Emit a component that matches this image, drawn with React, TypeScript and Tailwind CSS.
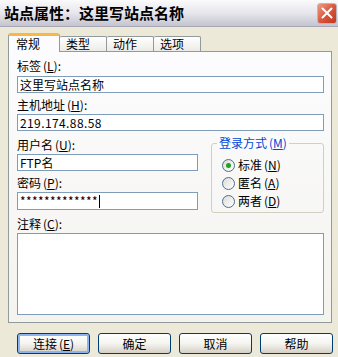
import React from "react";

const font = { fontFamily: '"Noto Sans CJK SC", "Liberation Sans", sans-serif' };

function U({ c }: { c: string }) {
  return <span className="underline underline-offset-[1px]">{c}</span>;
}

function Label({ text, k, mt }: { text: string; k: string; mt: string }) {
  return (
    <div className={`h-[14px] leading-[14px] text-[12px] text-black ${mt}`}>
      {text}
      <span className="ml-[2px]">(</span>
      <U c={k} />
      <span>):</span>
    </div>
  );
}

function Input({ value, mt, w, h, cursor, spaced }: { value: string; mt: string; w: string; h: string; cursor?: boolean; spaced?: boolean }) {
  return (
    <div className={`${mt} ${w} ${h} border border-[#7f9db9] bg-white flex items-center pl-[2px] text-[12px] leading-[14px] text-black`}>
      <span className={spaced ? "tracking-[0.4px]" : ""}>{value}</span>
      {cursor && <span className="inline-block w-px h-[13px] bg-black ml-[1px]" />}
    </div>
  );
}

function Radio({ checked, text, k }: { checked?: boolean; text: string; k: string }) {
  return (
    <div className="flex items-center h-[18px]">
      <div className="w-[13px] h-[13px] rounded-full border border-[#4a6f95] bg-gradient-to-br from-[#dcdcd6] to-white flex items-center justify-center">
        {checked && <div className="w-[5px] h-[5px] rounded-full bg-[#21a121]" />}
      </div>
      <span className="ml-[3px] text-[12px] leading-[14px] text-black">
        {text}
        <span className="ml-[2px]">(</span>
        <U c={k} />)
      </span>
    </div>
  );
}

function Btn({ children, def }: { children: React.ReactNode; def?: boolean }) {
  return (
    <div
      className={`w-[73px] h-[21px] rounded-[3px] border border-[#003c74] bg-gradient-to-b from-white via-[#f4f4f0] to-[#d6d0c5] flex items-center justify-center text-[12px] text-black ${
        def ? "shadow-[inset_0_0_0_2px_#8cb4f2]" : ""
      }`}
    >
      {children}
    </div>
  );
}

export default function App() {
  return (
    <div className="w-[338px] h-[357px] bg-[#ece9d8] flex flex-col overflow-hidden" style={font}>
      {/* title bar */}
      <div className="h-[27px] flex items-center justify-between pl-[4px] pr-[1px] bg-gradient-to-b from-[#fbfbfc] via-[#e6e6ec] to-[#c4c4d0] border-b border-[#a8a8b4]">
        <span className="text-[15px] font-bold text-black">站点属性：这里写站点名称</span>
        <div className="w-[20px] h-[21px] rounded-[3px] border border-[#b8b8c4] bg-gradient-to-br from-[#ee9a86] via-[#d9583d] to-[#c0381c] flex items-center justify-center">
          <svg width="12" height="12" viewBox="0 0 12 12">
            <path d="M1.5 1.5 L10.5 10.5 M10.5 1.5 L1.5 10.5" stroke="white" strokeWidth="2" strokeLinecap="round" />
          </svg>
        </div>
      </div>

      <div className="pl-[8px] pt-[5px] flex flex-col">
        {/* tabs */}
        <div className="flex items-end h-[19px]">
          <div className="relative z-10 -mb-px w-[52px] h-[19px] bg-[#fcfcfe] border-x border-[#919b9c] border-t-[3px] border-t-[#f7b847] rounded-t-[3px] flex items-center pl-[7px] text-[12px] text-black">
            常规
          </div>
          {["类型", "动作", "选项"].map((t) => (
            <div
              key={t}
              className="w-[47px] h-[15px] border-t border-r border-[#919b9c] rounded-t-[2px] bg-gradient-to-b from-white to-[#ecebe6] flex items-center pl-[6px] text-[12px] text-black"
            >
              {t}
            </div>
          ))}
        </div>

        {/* panel */}
        <div className="w-[324px] h-[272px] border border-[#919b9c] bg-gradient-to-b from-[#fcfcfe] to-[#f4f3ee] pl-[8px] flex flex-col">
          <Label text="标签" k="L" mt="mt-[7px]" />
          <Input value="这里写站点名称" mt="mt-[3px]" w="w-[307px]" h="h-[17px]" />
          <Label text="主机地址" k="H" mt="mt-[5px]" />
          <Input value="219.174.88.58" mt="mt-[2px]" w="w-[307px]" h="h-[17px]" spaced />

          <div className="flex">
            <div className="flex flex-col w-[181px]">
              <Label text="用户名" k="U" mt="mt-[7px]" />
              <Input value="FTP名" mt="mt-[2px]" w="w-[181px]" h="h-[17px]" />
              <Label text="密码" k="P" mt="mt-[5px]" />
              <Input value="*************" mt="mt-[2px]" w="w-[181px]" h="h-[18px]" cursor spaced />
            </div>
            <div className="relative ml-[13px] mt-[12px] w-[113px] h-[70px] border border-[#d0d0bf] rounded-[3px] pl-[10px] pt-[12px] flex flex-col">
              <span className="absolute -top-[8px] left-[5px] px-[2px] bg-[#fbfbfc] text-[12px] leading-[14px] text-[#0046d5]">
                登录方式<span className="ml-[2px]">(</span>
                <U c="M" />)
              </span>
              <Radio checked text="标准" k="N" />
              <Radio text="匿名" k="A" />
              <Radio text="两者" k="D" />
            </div>
          </div>

          <Label text="注释" k="C" mt="mt-[4px]" />
          <div className="mt-[2px] w-[307px] h-[82px] border border-[#7f9db9] bg-white" />
        </div>

        {/* buttons */}
        <div className="flex gap-[8px] pl-[9px] mt-[10px]">
          <Btn def>
            连接<span className="ml-[2px]">(</span>
            <U c="E" />)
          </Btn>
          <Btn>确定</Btn>
          <Btn>取消</Btn>
          <Btn>帮助</Btn>
        </div>
      </div>
    </div>
  );
}
